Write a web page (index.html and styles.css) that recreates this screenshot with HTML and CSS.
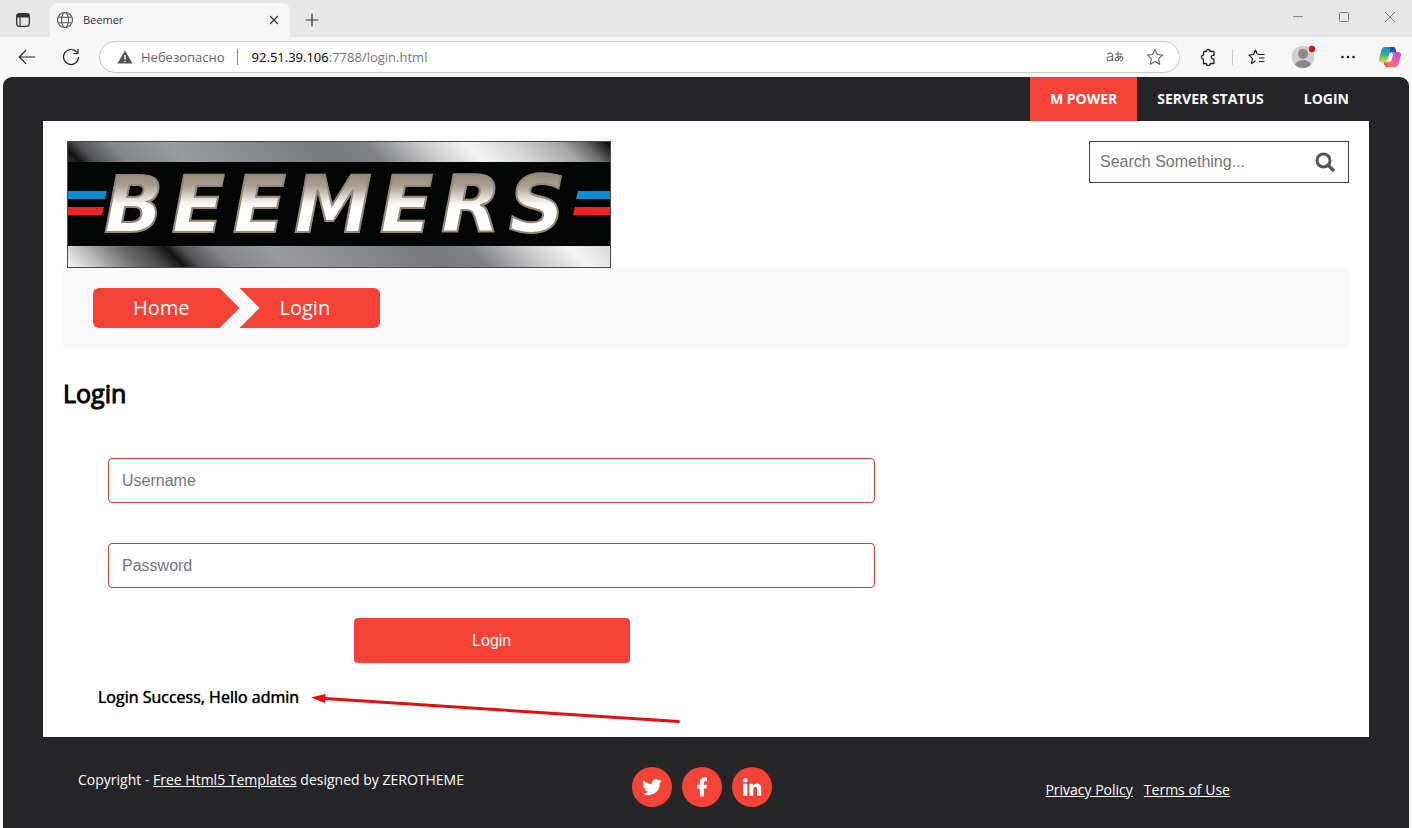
FILE: index.html
```html
<!DOCTYPE html>
<html lang="en">
<head>
<meta charset="utf-8">
<title>Beemer</title>
<link rel="stylesheet" href="styles.css">
</head>
<body>
<div class="browser">
  <div class="tabstrip">
    <button class="icon-btn workspace" aria-label="Tab actions"><svg width="16" height="16" viewBox="0 0 16 16"><rect x="1.7" y="1.7" width="12.6" height="12.6" rx="2.5" fill="none" stroke="#333" stroke-width="1.3"/><path d="M1.5 5.5V4a2.5 2.5 0 0 1 2.5-2.5h8A2.5 2.5 0 0 1 14.500 4v1.500z" fill="#333"/><path d="M5 5v9" stroke="#333" stroke-width="1.1"/></svg></button>
    <div class="tab">
      <svg width="18" height="18" viewBox="0 0 18 18" fill="none" stroke="#555" stroke-width="1.1"><circle cx="9" cy="9" r="7.500"/><ellipse cx="9" cy="9" rx="3.500" ry="7.500"/><path d="M2.300 6.300h13.400M2.300 11.700h13.400"/></svg>
      <span class="tab-title">Beemer</span>
      <button class="icon-btn" aria-label="Close tab"><svg width="10" height="10" viewBox="0 0 10 10"><path d="M1 1l8 8M9 1l-8 8" stroke="#333" stroke-width="1.200"/></svg></button>
    </div>
    <button class="icon-btn new-tab" aria-label="New tab"><svg width="14" height="14" viewBox="0 0 14 14"><path d="M7 .5v13M.5 7h13" stroke="#333" stroke-width="1.200"/></svg></button>
    <div class="window-controls">
      <button class="icon-btn" aria-label="Minimize"><svg width="12" height="12" viewBox="0 0 12 12"><path d="M1 5.500h10" stroke="#888"/></svg></button>
      <button class="icon-btn" aria-label="Maximize"><svg width="12" height="12" viewBox="0 0 12 12"><rect x="1.500" y="1.500" width="9" height="9" rx="1" fill="none" stroke="#777"/></svg></button>
      <button class="icon-btn" aria-label="Close"><svg width="12" height="12" viewBox="0 0 12 12"><path d="M1 1l10 10M11 1L1 11" stroke="#777"/></svg></button>
    </div>
  </div>
  <div class="toolbar">
    <button class="icon-btn" aria-label="Back"><svg width="18" height="16" viewBox="0 0 18 16" fill="none" stroke="#222" stroke-width="1.200"><path d="M17 8H1.500M8 1.200L1.300 8 8 14.800"/></svg></button>
    <button class="icon-btn reload" aria-label="Reload"><svg width="18" height="18" viewBox="0 0 18 18" fill="none" stroke="#222" stroke-width="1.200"><path d="M16.500 9A7.500 7.500 0 1 1 15 4.500M16 1v4.500h-4.500"/></svg></button>
    <div class="address">
      <svg width="16" height="14" viewBox="0 0 16 14"><path d="M8 .5L15.500 13.500H.5z" fill="#555"/><path d="M8 5v4.500M8 10.700v1.400" stroke="#fff" stroke-width="1.400"/></svg>
      <span class="warn">Небезопасно</span>
      <span class="rule"></span>
      <span class="url"><b>92.51.39.106</b>:7788/login.html</span>
      <svg class="translate" width="18" height="14" viewBox="0 0 18 14" fill="none" stroke="#666" stroke-width="1.100"><path d="M1.500 4.300Q6.500 1.500 6.500 5.500V11M6.500 6.500Q1 6.300 1 8.800C1 11.500 5 11.500 6.500 8.500M9 4h7.500M12 1.500c-.4 4 0 6.500.7 9M15 5.500c-.5 3.500-4 6-5.300 5-1.700-1.600 1.300-4 4.300-4 4 0 3.800 4-.2 4.800"/></svg>
      <button class="icon-btn" aria-label="Add to favorites"><svg width="18" height="18" viewBox="0 0 18 18" fill="none" stroke="#666" stroke-width="1.100" stroke-linejoin="round"><path d="M9 1.500l2.300 5 5.200.6-3.900 3.600 1.100 5.500L9 13.500l-4.700 2.700 1.100-5.500L1.500 7.100l5.200-.6z"/></svg></button>
    </div>
    <div class="tools">
      <button class="icon-btn" aria-label="Extensions"><svg width="18" height="18" viewBox="0 0 18 18" fill="none" stroke="#222" stroke-width="1.300" stroke-linejoin="round"><path d="M5 3.500h2.200a2 2 0 0 1 4 0H15v3.800h-1a1.800 1.800 0 0 0 0 3.600h1V15.500h-3.700a2 2 0 0 1-4 0H4.500v-4.300a2 2 0 0 1 0-4V4z"/></svg></button>
      <span class="rule light"></span>
      <button class="icon-btn" aria-label="Favorites"><svg width="18" height="18" viewBox="0 0 18 18" fill="none" stroke="#222" stroke-width="1.200" stroke-linejoin="round"><path d="M10 6.500h6.500M11 10h5.500M11 13.500h5.500M9.500 6.500L7.500 2l-2 4.500-4.500.6 3.500 3.500-1 5L7.500 13"/></svg></button>
      <button class="icon-btn profile" aria-label="Profile"><svg width="24" height="24" viewBox="0 0 24 24"><circle cx="12" cy="12" r="11.200" fill="#d2d0ce"/><circle cx="12" cy="9" r="5" fill="#8a8886"/><path d="M4 19.500c1.500-3 4.500-4.500 8-4.500s6.500 1.500 8 4.500a11 11 0 0 1-16 0z" fill="#8a8886"/><circle cx="21" cy="4" r="3.200" fill="#d1131c"/></svg></button>
      <button class="icon-btn" aria-label="Settings and more"><svg width="16" height="4" viewBox="0 0 16 4" fill="#222"><circle cx="2.500" cy="2" r="1.300"/><circle cx="8" cy="2" r="1.300"/><circle cx="13.500" cy="2" r="1.300"/></svg></button>
      <button class="icon-btn copilot" aria-label="Copilot"><svg width="24" height="22" viewBox="0 0 24 22"><defs><linearGradient id="ca" x1="0" y1="0" x2="0" y2="1"><stop offset="0" stop-color="#168be0"/><stop offset=".5" stop-color="#36b37e"/><stop offset="1" stop-color="#ffd02e"/></linearGradient><linearGradient id="cb" x1="1" y1="0" x2="0" y2="1"><stop offset="0" stop-color="#a05be8"/><stop offset=".5" stop-color="#ee5e9b"/><stop offset="1" stop-color="#ff8d4d"/></linearGradient></defs><path d="M7 1h8q2 0 2.500 2l.8 3H14q-2 0-2.700 2L9 15q-.5 1.500-2 1.500H4Q.5 16.500 1 13L3.500 4Q4.500 1 7 1z" fill="url(#ca)"/><path d="M12 1h3q2 0 2.500 2l.8 3H14q-1.500 0-2 1z" fill="#1c4fc4"/><path d="M17 21H9q-2 0-2.500-2l-.7-2.500H8q2 0 2.700-2L13 7.500Q13.500 6 15 6h5q3.500 0 3 3.500L20.500 18q-1 3-3.500 3z" fill="url(#cb)"/><path d="M13 7.500h2.500l-2.500 8h-3z" fill="#fff"/><path d="M6 16.500h3.500l1.500 4.500H9q-2 0-2.500-2z" fill="#ef5a3c"/></svg></button>
    </div>
  </div>
</div>
<div class="page">
  <nav class="topnav">
    <a href="#" class="active">M POWER</a>
    <a href="#">SERVER STATUS</a>
    <a href="#">LOGIN</a>
  </nav>
  <main class="content">
    <header class="masthead">
      <a href="#" class="logo" aria-label="Beemers home">
        <svg width="544" height="127" viewBox="0 0 544 127">
          <defs>
            <linearGradient id="metal" gradientUnits="userSpaceOnUse" x1="0" y1="127" x2="335" y2="-208">
              <stop offset="0" stop-color="#fff"/><stop offset=".04" stop-color="#ccc"/><stop offset=".1" stop-color="#777"/><stop offset=".15" stop-color="#444"/><stop offset=".177" stop-color="#111"/><stop offset=".2" stop-color="#505052"/><stop offset=".25" stop-color="#85868a"/><stop offset=".34" stop-color="#9b9ca0"/><stop offset=".56" stop-color="#77787b"/><stop offset=".63" stop-color="#818285"/><stop offset=".71" stop-color="#c8c8c9"/><stop offset=".78" stop-color="#f4f4f4"/><stop offset=".845" stop-color="#d8d8d8"/><stop offset=".92" stop-color="#a8a8a8"/><stop offset=".96" stop-color="#666"/><stop offset="1" stop-color="#000"/>
            </linearGradient>
            <linearGradient id="chrome" gradientUnits="userSpaceOnUse" x1="0" y1="33" x2="0" y2="91">
              <stop offset="0" stop-color="#94887b"/><stop offset=".2" stop-color="#a99f94"/><stop offset=".5" stop-color="#f6f4f2"/><stop offset=".6" stop-color="#fff"/>
            </linearGradient>
          </defs>
          <rect x=".5" y=".5" width="543" height="126" fill="url(#metal)" stroke="#48484a"/>
          <rect x="1" y="21" width="542" height="84" fill="#030504"/>
          <path d="M1 50h39l-2 8H1zM511 50h32v8h-34z" fill="#0b8bd2"/>
          <path d="M1 66h36l-2 8H1zM508 66h35v8h-37z" fill="#ee2429"/>
          <text class="wordmark" x="37" y="91" fill="url(#chrome)" stroke="#94887b">BEEMERS</text>
        </svg>
      </a>
      <form class="search">
        <input type="text" placeholder="Search Something..." aria-label="Search">
        <button type="button" aria-label="Search"><svg width="20" height="20" viewBox="0 0 20 20" fill="none" stroke="#555"><circle cx="8.500" cy="8.500" r="6.500" stroke-width="3"/><path d="M13 13l5 5" stroke-width="3.400" stroke-linecap="round"/></svg></button>
      </form>
    </header>
    <nav class="crumbs" aria-label="Breadcrumb">
      <a href="#" class="crumb first">Home</a>
      <a href="#" class="crumb last">Login</a>
    </nav>
    <h1>Login</h1>
    <section class="login">
      <form class="login-form">
        <input type="text" placeholder="Username" aria-label="Username">
        <input type="password" placeholder="Password" aria-label="Password">
        <button type="button">Login</button>
      </form>
      <p class="message">Login Success, Hello admin
        <svg class="arrow" width="370" height="30" viewBox="0 0 370 30"><path d="M14 4.500L367.500 27.500" stroke="#e60f0f" stroke-width="3" stroke-linecap="round"/><path d="M0 3.500L14.500 0l-.5 9z" fill="#f00"/></svg>
      </p>
    </section>
  </main>
  <footer class="footer">
    <p class="copyright">Copyright - <a href="#">Free Html5 Templates</a> designed by ZEROTHEME</p>
    <div class="social">
      <a href="#" aria-label="Twitter"><svg width="20" height="20" viewBox="0 0 24 24" fill="#fff"><path d="M23.600 4.900a9.700 9.700 0 0 1-2.700.8A4.800 4.800 0 0 0 23 3.100a9.600 9.600 0 0 1-3 1.100 4.800 4.800 0 0 0-8.200 4.400A13.600 13.600 0 0 1 1.900 3.600a4.800 4.800 0 0 0 1.500 6.400 4.800 4.800 0 0 1-2.200-.6 4.800 4.800 0 0 0 3.900 4.800 4.800 4.800 0 0 1-2.200.1 4.800 4.800 0 0 0 4.500 3.300A9.600 9.600 0 0 1 .3 19.600a13.600 13.600 0 0 0 20.900-12.100c1-.7 1.800-1.600 2.400-2.600z"/></svg></a>
      <a href="#" aria-label="Facebook"><svg width="20" height="20" viewBox="0 0 20 20" fill="#fff"><path d="M15 .7v3.500h-1.700c-1.200 0-1.500.6-1.500 1.500V7.700H15l-.5 3.700h-2.700V19.500H7.800v-8.100H5V7.700h2.800V5.200C7.800 2.200 9.700.5 12.500.5c1.200 0 2.200.1 2.500.2z"/></svg></a>
      <a href="#" aria-label="LinkedIn"><svg width="20" height="20" viewBox="0 0 20 20" fill="#fff"><circle cx="3.200" cy="3.200" r="2.300"/><path d="M1.100 6.700h4.200v12H1.100zM7.300 6.700h4v1.700c.6-1 1.900-2 3.600-2 3.400 0 4.300 2.200 4.300 5.200v7.100H15v-6.200c0-1.500-.2-2.700-1.800-2.700-1.700 0-1.900 1.200-1.900 2.700v6.200h-4z"/></svg></a>
    </div>
    <div class="legal"><a href="#">Privacy Policy</a><a href="#">Terms of Use</a></div>
  </footer>
</div>
</body>
</html>
```
FILE: styles.css
```css
* { box-sizing: border-box; }

body {
  margin: 0;
  min-height: 100vh;
  display: flex;
  flex-direction: column;
  background: #f7f7f7;
  font: 14px/20px "Open Sans", "Noto Sans", sans-serif;
  color: #000;
}

button { font: inherit; cursor: pointer; }
svg { display: block; flex: none; }

.icon-btn {
  padding: 0;
  border: 0;
  background: none;
  display: flex;
}

/* Browser window */
.tabstrip {
  height: 37px;
  display: flex;
  align-items: center;
  background: #e7e7e7;
  padding: 3px 16px 0 15px;
}
.tab {
  width: 240px;
  height: 34px;
  margin-left: 19px;
  padding: 0 11px 0 6px;
  display: flex;
  align-items: center;
  gap: 9px;
  background: #f7f7f7;
  border-radius: 8px 8px 0 0;
  font-size: 11px;
  color: #333;
}
.tab-title { flex: 1; }
.new-tab { margin-left: 15px; }
.window-controls {
  margin-left: auto;
  padding-bottom: 6px;
  display: flex;
  gap: 34px;
}
.toolbar {
  height: 40px;
  display: flex;
  align-items: center;
  padding: 0 10px 0 18px;
}
.reload { margin: 0 19px 0 26px; }
.address {
  flex: 1;
  height: 32px;
  padding: 0 15px 0 17px;
  display: flex;
  align-items: center;
  background: #fff;
  border: 1px solid #ccc;
  border-radius: 16px;
  font-size: 13px;
  color: #777;
}
.warn { margin-left: 8px; color: #666; }
.rule { width: 1px; height: 16px; margin: 0 14px 0 12px; background: #888; }
.rule.light { margin: 0; background: #ccc; }
.url b { font-weight: 400; color: #000; }
.translate { margin: 0 22px 0 auto; }
.tools {
  display: flex;
  align-items: center;
  gap: 15px;
  margin-left: 19px;
}
.profile { margin: 0 10px; }
.copilot { margin-left: 7px; }

/* Site */
.page {
  flex: 1;
  margin: 0 3px;
  padding: 0 40px;
  background: #252527;
  border-radius: 9px 9px 0 0;
}
.topnav { display: flex; justify-content: flex-end; }
.topnav a {
  padding: 12px 20px;
  color: #fff;
  font-weight: 700;
  text-decoration: none;
}
.topnav .active { background: #f44336; }

.content { background: #fff; padding: 20px 20px 30px; }
.masthead {
  display: flex;
  justify-content: space-between;
  align-items: flex-start;
  padding-left: 4px;
}
.wordmark {
  font: italic 700 78px "DejaVu Sans", sans-serif;
  letter-spacing: 8px;
  stroke-width: 2px;
}
.search {
  width: 260px;
  height: 42px;
  display: flex;
  border: 1px solid #444;
}
.search input {
  flex: 1;
  min-width: 0;
  padding: 0 10px;
  border: 0;
  background: none;
  font: 16px "Liberation Sans", sans-serif;
}
.search button {
  width: 46px;
  padding: 0;
  border: 0;
  background: none;
  display: grid;
  place-items: center;
}
input::placeholder { color: #757575; }

.crumbs { display: flex; padding: 20px 30px; background: #fafafa; }
.crumb {
  height: 40px;
  color: #fff;
  background: #f44336;
  font-size: 20px;
  line-height: 40px;
  text-decoration: none;
}
.first {
  padding: 0 50px 0 40px;
  border-radius: 6px 0 0 6px;
  clip-path: polygon(0 0, calc(100% - 20px) 0, 100% 50%, calc(100% - 20px) 100%, 0 100%);
}
.last {
  padding: 0 50px 0 40px;
  border-radius: 0 6px 6px 0;
  clip-path: polygon(0 0, 100% 0, 100% 100%, 0 100%, 20px 50%);
}

h1 {
  margin: 27px 0 47px;
  font-size: 25px;
  line-height: 36px;
  font-weight: 400;
  -webkit-text-stroke: 1px #000;
}
.login { width: 66.667%; padding: 0 45px; }
.login-form { display: flex; flex-direction: column; }
.login-form input {
  height: 45px;
  margin-bottom: 40px;
  padding: 0 13px;
  border: 1px solid #c9453c;
  border-radius: 4px;
  background: #fff;
  font: 16px "Liberation Sans", sans-serif;
}
.login-form button {
  width: 36%;
  height: 45px;
  margin-top: -10px;
  align-self: center;
  border: 0;
  border-radius: 4px;
  background: #f44336;
  color: #fff;
  font: 16px "Liberation Sans", sans-serif;
}
.message {
  position: relative;
  width: max-content;
  margin: 24px 0 0 -10px;
  font-size: 16px;
  text-shadow: 0 0 1px #000;
}
.arrow { position: absolute; left: 100%; top: 7px; margin-left: 12px; }

.footer {
  display: grid;
  grid-template-columns: repeat(3, 1fr);
  padding: 30px 20px 20px;
  color: #fff;
}
.footer a { color: inherit; }
.copyright { margin: 3px 0 0 15px; }
.social { display: flex; justify-content: center; gap: 10px; padding-right: 7px; }
.social a {
  width: 40px;
  height: 40px;
  display: grid;
  place-items: center;
  border-radius: 50%;
  background: #f44336;
}
.legal {
  display: flex;
  justify-content: center;
  gap: 11px;
  padding: 13px 0 0 6px;
}
```
